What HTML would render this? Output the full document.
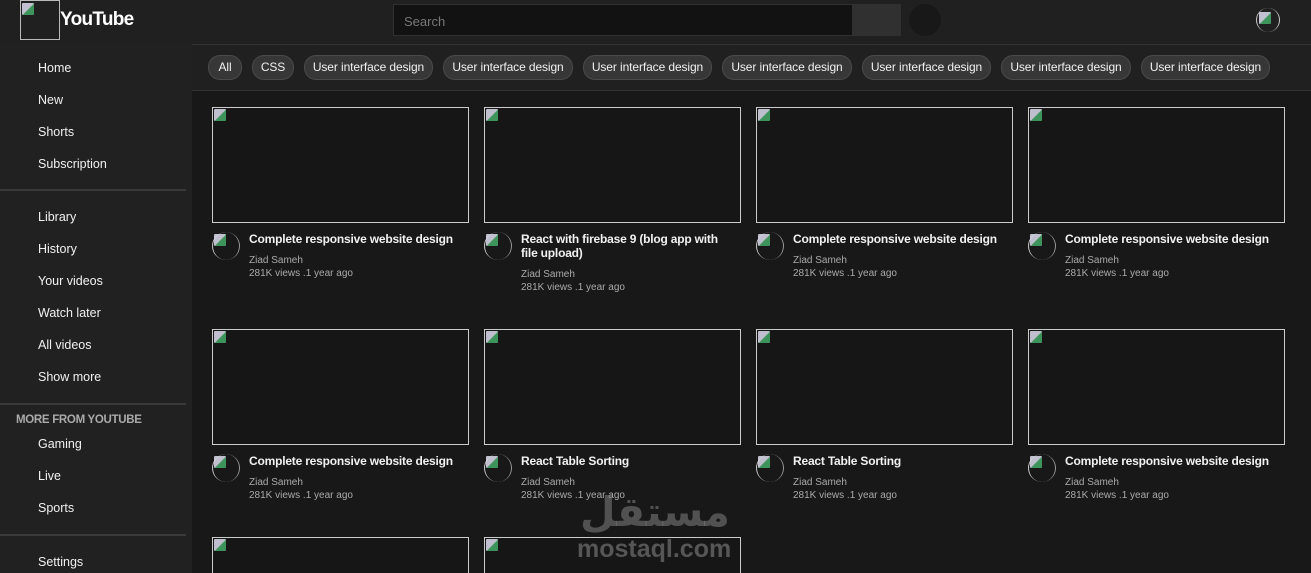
<!DOCTYPE html><html><head><meta charset="utf-8"><style>
*{margin:0;padding:0;box-sizing:border-box}
html{width:1311px;height:573px;overflow:hidden}
body{width:1311px;height:573px;overflow:hidden;background:#181818;font-family:"Liberation Sans",Arial,sans-serif;color:#fff;position:relative}
.a{position:absolute}
.hdr{left:0;top:0;width:1311px;height:44px;background:#202020}
.side{left:0;top:44px;width:192px;height:529px;background:#212121}
.nav{position:absolute;left:38px;font-size:12.5px;color:#f1f1f1}
.hr{position:absolute;left:0;width:186px;height:2px;background:#3a3a3a}
.chips{left:192px;top:44px;width:1119px;height:47px;background:#202020;border-top:1px solid #333;border-bottom:1px solid #333}
.chip{position:absolute;top:10px;height:25px;border-radius:12px;background:#373737;border:1px solid #4a4a4a;font-size:12px;line-height:23px;text-align:center;color:#f1f1f1;letter-spacing:-0.1px}
.th{position:absolute;width:257px;height:116px;border:1px solid #ccc;background:#161616;overflow:hidden}
.av{position:absolute;width:28px;height:28px;border-radius:50%;border-left:1px solid #ccc;border-right:1px solid #999}
.t{position:absolute;width:215px;font-size:12px;font-weight:bold;line-height:14px;color:#f1f1f1;letter-spacing:-0.2px}
.m{position:absolute;font-size:10px;color:#aaa;line-height:13px}
.ic{position:absolute;width:12px;height:12px;background:linear-gradient(135deg,#dde 0,#dde 50%,#4a6 55%,#4a6 100%);border-radius:1px;opacity:.85}
</style></head><body>
<div class="a hdr"></div>
<div class="a" style="left:20px;top:0;width:40px;height:40px;border:1px solid #bbb"></div>
<div class="ic" style="left:22px;top:3px"></div>
<div class="a" style="left:60px;top:9px;font-size:19px;font-weight:bold;letter-spacing:-0.7px">YouTube</div>
<div class="a" style="left:393px;top:4px;width:460px;height:32px;background:#121212;border:1px solid #303030;font-size:13px;color:#777;padding:9px 10px">Search</div>
<div class="a" style="left:852px;top:4px;width:49px;height:32px;background:#303030"></div>
<div class="a" style="left:909px;top:4px;width:32px;height:32px;border-radius:50%;background:#181818"></div>
<div class="a" style="left:1256px;top:8px;width:24px;height:24px;border-radius:50%;border-left:1px solid #ccc;border-right:1px solid #ccc"></div>
<div class="ic" style="left:1259px;top:12px"></div>
<div class="a side"></div>
<div class="nav" style="top:61px">Home</div>
<div class="nav" style="top:93px">New</div>
<div class="nav" style="top:125px">Shorts</div>
<div class="nav" style="top:157px">Subscription</div>
<div class="hr" style="top:189px"></div>
<div class="nav" style="top:210px">Library</div>
<div class="nav" style="top:242px">History</div>
<div class="nav" style="top:274px">Your videos</div>
<div class="nav" style="top:306px">Watch later</div>
<div class="nav" style="top:338px">All videos</div>
<div class="nav" style="top:370px">Show more</div>
<div class="hr" style="top:403px"></div>
<div class="a" style="left:16px;top:414px;font-size:11.5px;font-weight:bold;color:#aaa;letter-spacing:-0.3px">MORE FROM YOUTUBE</div>
<div class="nav" style="top:437px">Gaming</div>
<div class="nav" style="top:469px">Live</div>
<div class="nav" style="top:501px">Sports</div>
<div class="hr" style="top:534px"></div>
<div class="nav" style="top:555px">Settings</div>
<div class="a chips">
<div class="chip" style="left:16px;width:34px">All</div>
<div class="chip" style="left:60px;width:42px">CSS</div>
<div class="chip" style="left:112px;width:129px">User interface design</div>
<div class="chip" style="left:251px;width:130px">User interface design</div>
<div class="chip" style="left:391px;width:129px">User interface design</div>
<div class="chip" style="left:530px;width:130px">User interface design</div>
<div class="chip" style="left:670px;width:129px">User interface design</div>
<div class="chip" style="left:809px;width:130px">User interface design</div>
<div class="chip" style="left:949px;width:129px">User interface design</div>
</div>
<div id="g"></div>
<div class="a" style="left:580px;top:488px;font-size:41px;font-weight:bold;color:rgba(130,130,130,0.55);font-family:'DejaVu Sans',sans-serif">مستقل</div>
<div class="a" style="left:577px;top:535px;font-size:25px;font-weight:bold;color:rgba(130,130,130,0.6)">mostaql.com</div>
<script>
var xs=[212,484,756,1028],ys=[107,329,537];
var T=[["Complete responsive website design","React with firebase 9 (blog app with file upload)","Complete responsive website design","Complete responsive website design"],["Complete responsive website design","React Table Sorting","React Table Sorting","Complete responsive website design"]];
var h="";
for(var r=0;r<3;r++)for(var c=0;c<4;c++){if(r==2&&c>1)continue;var x=xs[c],y=ys[r];
var hs=r==2?'height:36px;border-bottom:none;':'';
h+='<div class="th" style="'+hs+'left:'+x+'px;top:'+y+'px"></div><div class="ic" style="left:'+(x+2)+'px;top:'+(y+2)+'px"></div>';
if(r<2){var t=T[r][c],two=t.length>36;
h+='<div class="av" style="left:'+x+'px;top:'+(y+125)+'px"></div><div class="ic" style="left:'+(x+2)+'px;top:'+(y+127)+'px"></div>';
h+='<div class="t" style="left:'+(x+37)+'px;top:'+(y+125)+'px">'+t+'</div>';
var o=two?14:0;
h+='<div class="m" style="left:'+(x+37)+'px;top:'+(y+147+o)+'px">Ziad Sameh</div><div class="m" style="left:'+(x+37)+'px;top:'+(y+160+o)+'px">281K views .1 year ago</div>';}}
document.getElementById('g').innerHTML=h;
</script>
</body></html>
